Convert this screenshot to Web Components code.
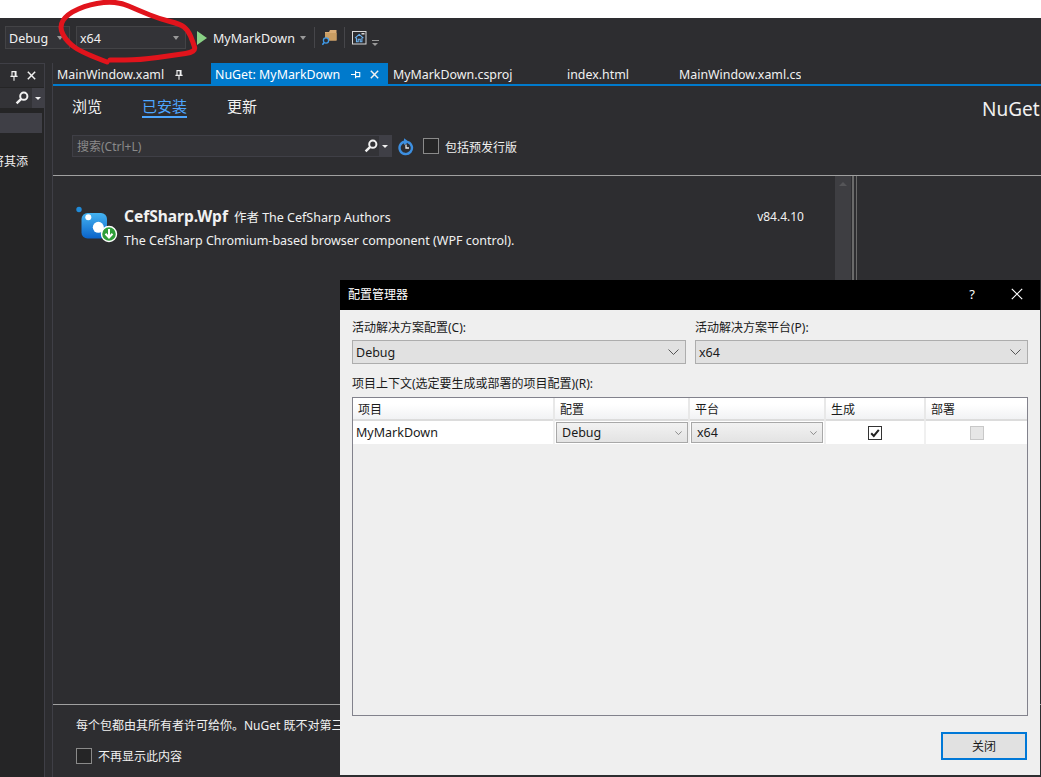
<!DOCTYPE html>
<html lang="zh">
<head>
<meta charset="utf-8">
<title>MyMarkDown</title>
<style>
  html, body { margin: 0; height: 100%; background: #fff; overflow: hidden; }
  body { font: 13px "Noto Sans", "Noto Sans CJK SC", sans-serif; color: #f1f1f1; }
</style>
</head>
<body>
<vs-shell>
  <vs-toolbar slot="toolbar"></vs-toolbar>
  <side-panel slot="side"></side-panel>
  <doc-tabs slot="tabs"></doc-tabs>
  <nuget-panel slot="main"></nuget-panel>
</vs-shell>
<config-dialog></config-dialog>
<red-scribble></red-scribble>

<script>
const FONT = `"Noto Sans", "Noto Sans CJK SC", sans-serif`;
const SEARCH = `<svg width="14" height="14" viewBox="0 0 14 14"><circle cx="8.8" cy="5.2" r="3.6" fill="none" stroke="#f1f1f1" stroke-width="2"/><path d="M6.2 7.8 1.6 12.4" stroke="#f1f1f1" stroke-width="2.4"/></svg>`;
const PIN = `<svg width="8" height="10" viewBox="0 0 10 12"><path d="M2.5 .5h5v6h-5zM.5 6.5h9M5 7v5M6.500 1v5" fill="none" stroke="#f1f1f1" stroke-width="1.4"/></svg>`;
const PIN_SIDE = `<svg width="10" height="9" viewBox="0 0 12 10"><path d="M5.5 2.5h5v5h-5zM5.5 .5v9M0 5h5" fill="none" stroke="#fff" stroke-width="1.3"/></svg>`;
const CLOSE = `<svg width="9" height="9" viewBox="0 0 11 11"><path d="M1 1l9 9M10 1l-9 9" stroke="#f1f1f1" stroke-width="1.8"/></svg>`;
const CHEVRON = `<svg width="11" height="6" viewBox="0 0 11 6"><path d="M.5.5l5 5 5-5" fill="none" stroke="#555" stroke-width="1"/></svg>`;

function shadow(el, html) {
  el.attachShadow({mode: 'open'}).innerHTML = html;
}

customElements.define('vs-shell', class extends HTMLElement {
  constructor() {
    super();
    shadow(this, `
      <style>
        :host { display: flex; flex-direction: column; height: 100vh; padding-top: 18px; box-sizing: border-box; overflow: hidden; }
        .body { flex: 1; min-height: 0; display: flex; background: #2d2d30; }
        .gap { width: 7px; flex: none; }
        .work { flex: 1; min-width: 0; display: flex; flex-direction: column; border-left: 1px solid #3f3f46; }
      </style>
      <slot name="toolbar"></slot>
      <div class="body">
        <slot name="side"></slot>
        <div class="gap"></div>
        <div class="work">
          <slot name="tabs"></slot>
          <slot name="main"></slot>
        </div>
      </div>`);
  }
});

customElements.define('tool-combo', class extends HTMLElement {
  constructor() {
    super();
    shadow(this, `
      <style>
        :host { display: flex; align-items: center; box-sizing: border-box; height: 23px; background: #333337; border: 1px solid #434346; padding: 0 6px 0 3px; color: #f1f1f1; font: 12.500px ${FONT}; }
        span { flex: 1; padding-top: 2px; }
        i { width: 0; height: 0; border: 3px solid transparent; border-top: 4px solid #999; border-bottom: 0; }
      </style>
      <span><slot></slot></span><i></i>`);
  }
});

customElements.define('vs-toolbar', class extends HTMLElement {
  constructor() {
    super();
    shadow(this, `
      <style>
        :host { display: flex; align-items: center; height: 45px; box-sizing: border-box; padding: 8px 0 14px 5px; background: #2d2d30; font: 12.500px ${FONT}; color: #f1f1f1; }
        tool-combo.a { width: 65px; margin-right: 6px; }
        tool-combo.b { width: 110px; margin-right: 11px; }
        .play { width: 0; height: 0; border-left: 10px solid #89d185; border-top: 7px solid transparent; border-bottom: 7px solid transparent; margin-right: 6px; }
        .name { padding-top: 2px; }
        .arrow { width: 0; height: 0; border: 3px solid transparent; border-top: 4px solid #999; border-bottom: 0; margin: 0 8px 0 5px; }
        .sep { width: 1px; height: 21px; background: #46464a; }
        svg { display: block; }
        .f { margin: 0 7px 0 7px; }
        .h { margin: 0 5px 0 7px; }
        .more { width: 7px; margin-top: 11px; }
        .more b { display: block; height: 1px; width: 7px; background: #999; margin-bottom: 2px; }
        .more i { display: block; width: 0; height: 0; border: 3px solid transparent; border-top: 3px solid #999; border-bottom: 0; margin-left: .5px; }
      </style>
      <tool-combo class="a">Debug</tool-combo>
      <tool-combo class="b">x64</tool-combo>
      <div class="play"></div>
      <span class="name">MyMarkDown</span>
      <div class="arrow"></div>
      <div class="sep"></div>
      <svg class="f" width="15" height="17" viewBox="0 0 15 17">
        <path d="M3 3h4l1-2h6.500v10.500H3z" fill="#d9ac76"/><path d="M3 4h11.500v7.500H3z" fill="#c99d63"/>
        <circle cx="4" cy="11.500" r="2.600" fill="#2d2d30" stroke="#3f9bea" stroke-width="1.300"/><path d="M2.100 13.500.4 15.700" stroke="#3f9bea" stroke-width="1.600"/>
      </svg>
      <div class="sep"></div>
      <svg class="h" width="15" height="14" viewBox="0 0 15 14">
        <rect x=".5" y=".5" width="13.500" height="12.500" fill="none" stroke="#d8d8d8"/>
        <rect x="9.500" y="2" width="3" height="1.500" fill="#d8d8d8"/>
        <path d="M3 7.200 7.200 3.400 11.400 7.200M4.500 6.700V10.700H6.200V8.200h2v2.500h1.700V6.700" fill="none" stroke="#6db2ef" stroke-width="1.100"/>
      </svg>
      <div class="more"><b></b><i></i></div>`);
  }
});

customElements.define('side-panel', class extends HTMLElement {
  constructor() {
    super();
    shadow(this, `
      <style>
        :host { display: block; width: 45px; flex: none; box-sizing: border-box; background: #252526; border-right: 1px solid #3f3f46; overflow: hidden; font: 12px ${FONT}; color: #f1f1f1; }
        .head { height: 24px; box-sizing: border-box; border-top: 1px solid #3f3f46; background: #2d2d30; display: flex; align-items: center; gap: 9px; padding: 0 7px 0 10px; }
        .search { height: 20px; margin-top: 1px; background: #333337; display: flex; justify-content: flex-end; align-items: center; }
        .search .drop { width: 12px; height: 20px; background: #3f3f46; display: flex; align-items: center; justify-content: center; }
        .search i { width: 0; height: 0; border: 3px solid transparent; border-top: 3px solid #f1f1f1; border-bottom: 0; }
        .search svg { margin-right: 3px; }
        .sel { height: 20px; width: 42px; margin-top: 5px; background: #3f3f46; }
        .txt { display: flex; justify-content: flex-end; width: 28px; margin-top: 19px; overflow: hidden; white-space: nowrap; line-height: 20px; }
        svg { display: block; flex: none; }
      </style>
      <div class="head">${PIN}${CLOSE}</div>
      <div class="search">${SEARCH}<div class="drop"><i></i></div></div>
      <div class="sel"></div>
      <div class="txt"><span>将其添</span></div>`);
  }
});

customElements.define('doc-tabs', class extends HTMLElement {
  constructor() {
    super();
    shadow(this, `
      <style>
        :host { display: flex; height: 23px; box-sizing: border-box; border-bottom: 2px solid #007acc; font: 12.400px/19px ${FONT}; color: #f1f1f1; white-space: nowrap; }
        .tab { box-sizing: border-box; padding: 2px 0 0 5px; display: flex; align-items: center; height: 21px; overflow: hidden; }
        .t1 { width: 158px; padding-left: 4px; }
        .t1 svg { margin-left: 11px; }
        .t2 { width: 177px; background: #007acc; padding-left: 4px; color: #fff; }
        .t2 .p { margin-left: 11px; }
        .t2 .c { margin-left: 9px; }
        .t3 { width: 174px; }
        .t4 { width: 112px; }
        svg { display: block; flex: none; }
      </style>
      <div class="tab t1">MainWindow.xaml ${PIN}</div>
      <div class="tab t2">NuGet: MyMarkDown <span class="p">${PIN_SIDE}</span><span class="c">${CLOSE}</span></div>
      <div class="tab t3">MyMarkDown.csproj</div>
      <div class="tab t4">index.html</div>
      <div class="tab t5">MainWindow.xaml.cs</div>`);
  }
});

customElements.define('dark-check', class extends HTMLElement {
  constructor() {
    super();
    shadow(this, `
      <style>
        :host { display: inline-flex; align-items: center; gap: 6px; font: 12px/16px ${FONT}; color: #f1f1f1; }
        b { width: 16px; height: 16px; box-sizing: border-box; border: 1px solid #8a8a8a; background: #252526; }
        span { padding-top: 3px; }
      </style>
      <b></b><span><slot></slot></span>`);
  }
});

customElements.define('nuget-nav', class extends HTMLElement {
  constructor() {
    super();
    shadow(this, `
      <style>
        :host { display: flex; height: 32px; box-sizing: border-box; padding: 10px 0 0 19px; font: 15px/20px ${FONT}; color: #f1f1f1; }
        span { display: block; height: 20px; }
        .on { color: #4da6ff; border-bottom: 2px solid #4da6ff; margin: 0 40px; }
        .title { margin-left: auto; font-size: 19px; line-height: 26px; white-space: nowrap; width: 59px; }
      </style>
      <span>浏览</span><span class="on">已安装</span><span>更新</span><span class="title">NuGet</span>`);
  }
});

customElements.define('nuget-search', class extends HTMLElement {
  constructor() {
    super();
    shadow(this, `
      <style>
        :host { display: flex; align-items: center; margin: 17px 0 0 19px; font: 12px ${FONT}; }
        .box { width: 320px; height: 22px; box-sizing: border-box; background: #333337; border: 1px solid #3f3f46; display: flex; align-items: center; padding-left: 4px; color: #8a8a8a; }
        .box span { flex: 1; }
        .drop { width: 12px; height: 20px; background: #3f3f46; display: flex; align-items: center; justify-content: center; margin-left: 1px; }
        .drop i { width: 0; height: 0; border: 3px solid transparent; border-top: 3px solid #f1f1f1; border-bottom: 0; }
        svg { display: block; flex: none; }
        .r { margin: 2px 9px 0 6px; }
      </style>
      <div class="box"><span>搜索(Ctrl+L)</span>${SEARCH}<div class="drop"><i></i></div></div>
      <svg class="r" width="16" height="18" viewBox="0 0 16 18">
        <path d="M6.500 3.800a6.200 6.200 0 1 0 3.500 .3" fill="none" stroke="#3d8fe0" stroke-width="2.400"/>
        <path d="M6 .2 11.200 4 6 7z" fill="#3d8fe0"/>
        <path d="M8 6.500V10H11" fill="none" stroke="#e8e8e8" stroke-width="1.300"/>
      </svg>
      <dark-check>包括预发行版</dark-check>`);
  }
});

customElements.define('package-row', class extends HTMLElement {
  constructor() {
    super();
    shadow(this, `
      <style>
        :host { display: flex; padding: 30px 31px 0 22px; font: 12.500px/20px ${FONT}; color: #f1f1f1; }
        svg { display: block; flex: none; margin: -1px 5px 0 0; }
        .text { flex: 1; }
        .name { font-weight: 700; font-size: 15.500px; margin-right: 6px; }
        .desc { margin-top: 3px; }
        .ver { margin-top: 1px; font-size: 12px; }
      </style>
      <svg width="44" height="40" viewBox="0 0 44 40">
        <defs><linearGradient id="g" x1="0" y1="0" x2="0" y2="1"><stop offset="0" stop-color="#45b4f2"/><stop offset="1" stop-color="#0a63c9"/></linearGradient></defs>
        <circle cx="4" cy="4.500" r="2.700" fill="#1f8ad8"/>
        <rect x="6.500" y="8" width="25.500" height="25.500" rx="6" fill="url(#g)"/>
        <circle cx="13.300" cy="12.300" r="3" fill="#fff"/>
        <circle cx="23.300" cy="22.300" r="5.500" fill="#fff"/>
        <circle cx="34" cy="29" r="7.500" fill="#2f9e3a" stroke="#fff" stroke-width="1.400"/>
        <path d="M34 24v8M30.500 28.800 34 32.500l3.500-3.700" fill="none" stroke="#fff" stroke-width="2"/>
      </svg>
      <div class="text">
        <div><span class="name">CefSharp.Wpf</span><span>作者 The CefSharp Authors</span></div>
        <div class="desc">The CefSharp Chromium-based browser component (WPF control).</div>
      </div>
      <div class="ver">v84.4.10</div>`);
  }
});

customElements.define('nuget-panel', class extends HTMLElement {
  constructor() {
    super();
    shadow(this, `
      <style>
        :host { display: flex; flex-direction: column; flex: 1; min-height: 0; font: 12px ${FONT}; color: #f1f1f1; overflow: hidden; }
        .top { height: 90px; flex: none; box-sizing: border-box; border-bottom: 1px solid #a0a0a0; }
        .list { flex: 1; min-height: 0; display: flex; }
        package-row { width: 782px; flex: none; box-sizing: border-box; }
        .bar { width: 16px; height: 104px; background: #3e3e42; flex: none; display: flex; justify-content: center; padding-top: 6px; box-sizing: border-box; }
        .bar i { width: 0; height: 0; border: 4px solid transparent; border-bottom: 4px solid #555558; border-top: 0; }
        .split { width: 5px; height: 104px; box-sizing: border-box; border-left: 2px solid #6a6a6a; border-right: 1px solid #6a6a6a; margin-left: 1px; }
        .foot { height: 73px; flex: none; box-sizing: border-box; border-top: 1px solid #a0a0a0; padding: 12px 0 0 23px; white-space: nowrap; }
        .lic { line-height: 18px; }
        dark-check { margin-top: 11px; display: flex; }
      </style>
      <div class="top"><nuget-nav></nuget-nav><nuget-search></nuget-search></div>
      <div class="list">
        <package-row></package-row>
        <div class="bar"><i></i></div>
        <div class="split"></div>
      </div>
      <div class="foot">
        <div class="lic">每个包都由其所有者许可给你。NuGet 既不对第三方包负责，也不授予其许可证。</div>
        <dark-check>不再显示此内容</dark-check>
      </div>`);
  }
});

customElements.define('win-select', class extends HTMLElement {
  constructor() {
    super();
    shadow(this, `
      <style>
        :host { display: flex; align-items: center; justify-content: space-between; box-sizing: border-box; height: 24px; background: #e1e1e1; border: 1px solid #adadad; padding: 0 6px 0 3px; font: 12.500px ${FONT}; color: #1a1a1a; }
        :host([cell]) { height: 21px; background: linear-gradient(#f2f2f2, #e3e3e3); border-color: #a8a8a8; padding: 0 5px; }
        :host([cell]) svg { width: 7px; height: 4px; }
        svg { display: block; }
      </style>
      <span><slot></slot></span>${CHEVRON}`);
  }
});

customElements.define('config-table', class extends HTMLElement {
  constructor() {
    super();
    shadow(this, `
      <style>
        :host { display: block; flex: 1; min-height: 0; box-sizing: border-box; border: 1px solid #82828c; font: 12.500px ${FONT}; color: #1a1a1a; }
        .row { display: grid; grid-template-columns: 202px 135px 136px 100px 1fr; }
        .head { height: 23px; box-sizing: border-box; border-bottom: 2px solid #dcdcdc; background: linear-gradient(#fff 30%, #f1f2f4); }
        .head div { padding-left: 5px; border-right: 2px solid #e8e8e8; line-height: 23px; font-size: 12px; }
        .head div:last-child { border-right: 0; }
        .body { height: 23px; background: #fff; }
        .body > * { border-right: 2px solid #f0f0f0; box-sizing: border-box; }
        .body > *:last-child { border-right: 0; }
        .name { padding-left: 3px; line-height: 24px; }
        .cell { padding: 1px 0 1px 1px; }
        .cell.plat { padding-right: 1px; }
        .chk { display: flex; align-items: center; justify-content: center; }
        .box { width: 14px; height: 14px; box-sizing: border-box; border: 1px solid #333; background: #fff; display: block; }
        .box.off { border-color: #c8c8c8; background: #e6e6e6; }
      </style>
      <div class="row head"><div>项目</div><div>配置</div><div>平台</div><div>生成</div><div>部署</div></div>
      <div class="row body">
        <div class="name">MyMarkDown</div>
        <div class="cell"><win-select cell>Debug</win-select></div>
        <div class="cell plat"><win-select cell>x64</win-select></div>
        <div class="chk"><svg class="box" viewBox="0 0 12 12"><path d="M2.200 6.200 4.800 9 9.800 2.800" fill="none" stroke="#222" stroke-width="2"/></svg></div>
        <div class="chk"><span class="box off"></span></div>
      </div>`);
  }
});

customElements.define('config-dialog', class extends HTMLElement {
  constructor() {
    super();
    shadow(this, `
      <style>
        :host { position: absolute; left: 340px; top: 280px; width: 700px; height: 495px; display: flex; flex-direction: column; background: #efefef; font: 12px ${FONT}; color: #1a1a1a; }
        .title { height: 30px; box-sizing: border-box; padding: 0 0 2px 8px; flex: none; background: #000; color: #fff; display: flex; align-items: center; }
        .title span { flex: 1; }
        .help { font-size: 13px; margin-right: 36px; font-style: normal; }
        .title svg { margin-right: 17px; display: block; }
        .body { flex: 1; min-height: 0; display: flex; flex-direction: column; padding: 9px 12px 0 12px; }
        .pick { display: grid; grid-template-columns: 334px 333px; column-gap: 9px; }
        label { display: block; line-height: 18px; margin-bottom: 3px; }
        .ctx { margin: 11px 0 4px; line-height: 18px; }
        .foot { height: 59px; flex: none; display: flex; justify-content: flex-end; align-items: flex-start; padding: 16px 1px 0 0; box-sizing: border-box; }
        button { width: 86px; height: 28px; background: #e1e1e1; border: 2px solid #0078d7; font: 12px ${FONT}; color: #1a1a1a; padding: 0; }
      </style>
      <div class="title"><span>配置管理器</span><i class="help">?</i><svg width="12" height="12" viewBox="0 0 12 12"><path d="M.8.8l10.400 10.400M11.200.8.8 11.200" stroke="#fff" stroke-width="1.200"/></svg></div>
      <div class="body">
        <div class="pick">
          <div><label>活动解决方案配置(C):</label><win-select>Debug</win-select></div>
          <div><label>活动解决方案平台(P):</label><win-select>x64</win-select></div>
        </div>
        <div class="ctx">项目上下文(选定要生成或部署的项目配置)(R):</div>
        <config-table></config-table>
        <div class="foot"><button>关闭</button></div>
      </div>`);
  }
});

customElements.define('red-scribble', class extends HTMLElement {
  constructor() {
    super();
    // hand drawn circle round the x64 combo, smoothed through the midpoints
    const pts = [[107,62],[83,53],[67,42],[59,27],[67,14],[90,4],[117,1],[140,11],[160,19],[180,24],[188,30],[193,42],[196,52],[175,55],[140,60],[110,60]];
    let d = `M${pts[0]}`;
    for (let i = 1; i < pts.length - 1; i++) {
      const mx = (pts[i][0] + pts[i+1][0]) / 2, my = (pts[i][1] + pts[i+1][1]) / 2;
      d += ` Q${pts[i]} ${mx},${my}`;
    }
    d += ` L${pts[pts.length-1]}`;
    shadow(this, `
      <style>
        :host { position: absolute; left: 0; top: 0; width: 200px; height: 70px; pointer-events: none; }
        svg { display: block; }
      </style>
      <svg width="200" height="70"><path d="${d}" fill="none" stroke="#e1141c" stroke-width="5" stroke-linecap="round"/></svg>`);
  }
});
</script>
</body>
</html>
